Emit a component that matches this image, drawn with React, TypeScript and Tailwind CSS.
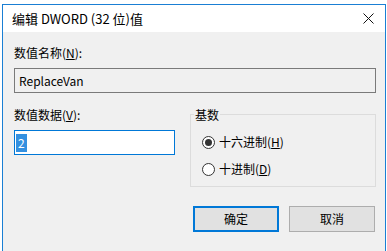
import React from "react";

const font = {
  fontFamily: '"Noto Sans CJK SC", "Noto Sans", sans-serif',
};

const Radio: React.FC<{ checked?: boolean; label: string; mnemonic: string }> = ({
  checked,
  label,
  mnemonic,
}) => (
  <div className="flex items-center h-[16px]">
    <span className="w-[13px] h-[13px] rounded-full border border-[#333] bg-white flex items-center justify-center">
      {checked && <span className="w-[7px] h-[7px] rounded-full bg-[#333]" />}
    </span>
    <span className="ml-[4px] leading-[16px]">
      {label}(<u>{mnemonic}</u>)
    </span>
  </div>
);

const App: React.FC = () => {
  return (
    <div
      className="w-[387px] h-[251px] bg-white overflow-hidden text-[12px] text-black"
      style={font}
    >
      <div className="ml-[2px] mt-[4px] w-[384px] h-[260px] border border-[#1a7fd4] flex flex-col">
        {/* Title bar */}
        <div className="h-[27px] bg-white flex items-center justify-between pl-[9px] pr-[10px]">
          <span className="text-[13px] leading-[16px]">编辑 DWORD (32 位)值</span>
          <svg width="11" height="11" viewBox="0 0 11 11" className="mr-[1px]">
            <path d="M0.5 0.5 L10.5 10.5 M10.5 0.5 L0.5 10.5" stroke="#111" strokeWidth="1" />
          </svg>
        </div>

        {/* Body */}
        <div className="flex-1 bg-[#f0f0f0] pl-[11px] pt-[13px]">
          <div className="leading-[16px]">
            数值名称(<u>N</u>):
          </div>
          <div className="mt-[7px] w-[362px] h-[25px] border border-[#7a7a7a] bg-[#f0f0f0] flex items-center pl-[4px]">
            ReplaceVan
          </div>

          <div className="mt-[14px] flex">
            <div className="w-[161px]">
              <div className="leading-[16px]">
                数值数据(<u>V</u>):
              </div>
              <div className="mt-[7px] h-[25px] border border-[#0078d7] bg-white flex items-center pl-[1px]">
                <span className="bg-[#3390e0] text-white h-[18px] leading-[18px] px-[2px]">2</span>
              </div>
            </div>

            <div className="ml-[15px] w-[186px] h-[80px] relative">
              <div className="absolute left-0 right-0 top-[7px] bottom-0 border border-[#dcdcdc]" />
              <span className="absolute left-[4px] top-0 bg-[#f0f0f0] px-[1px] leading-[16px]">基数</span>
              <div className="absolute left-[12px] top-[27px] flex flex-col gap-[11px]">
                <Radio checked label="十六进制" mnemonic="H" />
                <Radio label="十进制" mnemonic="D" />
              </div>
            </div>
          </div>

          <div className="mt-[19px] ml-[179px] flex gap-[10px]">
            <button className="w-[86px] h-[26px] bg-[#e1e1e1] border-2 border-[#0078d7] leading-[16px]">
              确定
            </button>
            <button className="w-[86px] h-[26px] bg-[#e1e1e1] border border-[#adadad] leading-[16px]">
              取消
            </button>
          </div>
        </div>
      </div>
    </div>
  );
};

export default App;
